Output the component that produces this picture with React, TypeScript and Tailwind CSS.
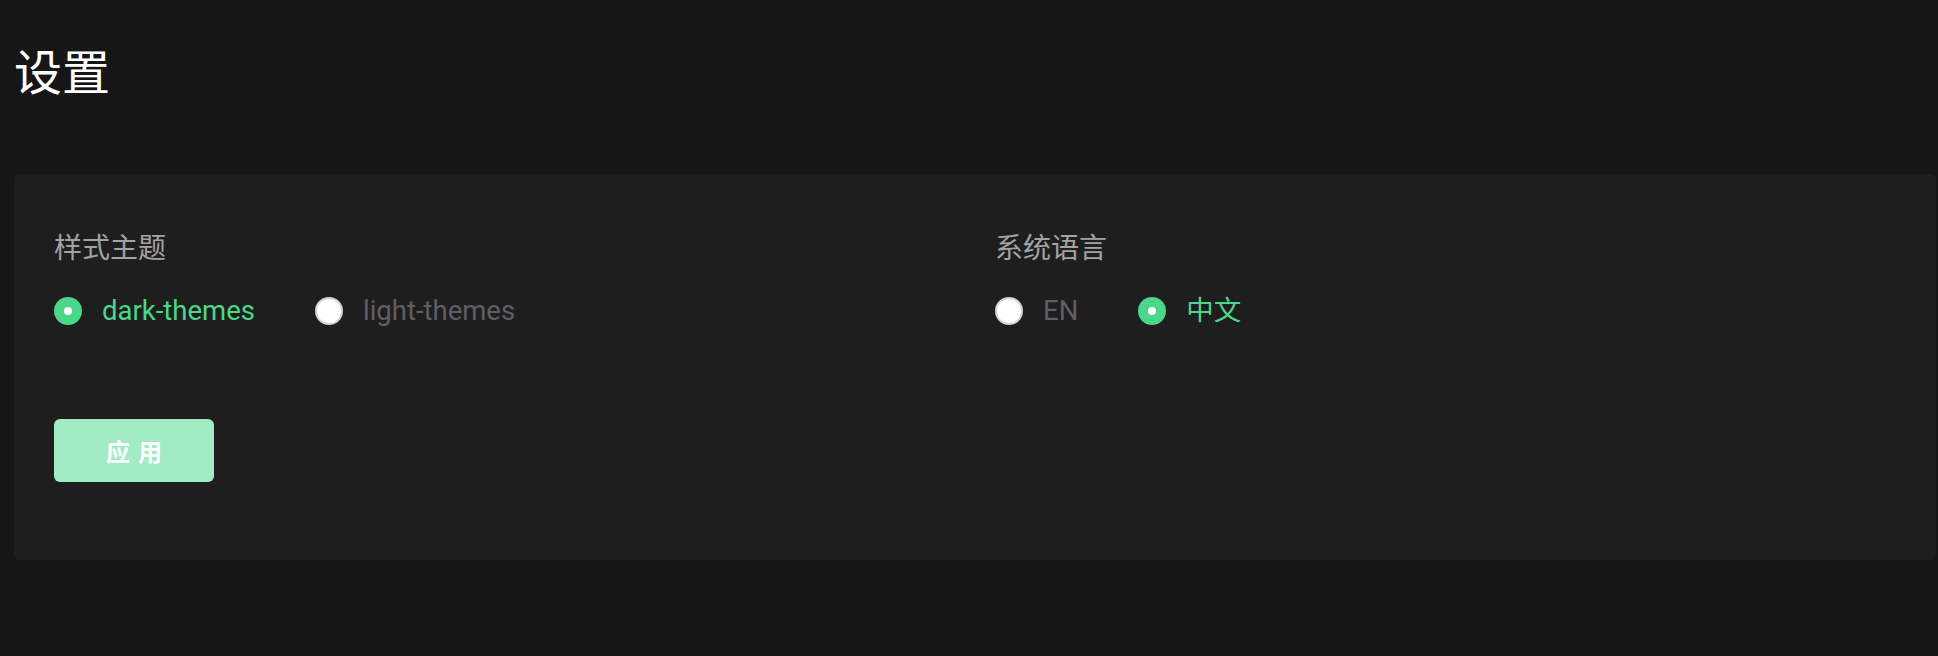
import * as React from "react";

const cjk = { fontFamily: '"Noto Sans CJK SC", sans-serif' };
const latin = { fontFamily: 'Roboto, "Noto Sans CJK SC", sans-serif' };

function Radio({ checked, label }: { checked: boolean; label: string }) {
  return (
    <div className="flex items-center">
      {checked ? (
        <span className="w-[28px] h-[28px] rounded-full bg-[#4ad78a] flex items-center justify-center">
          <span className="w-[8px] h-[8px] rounded-full bg-white" />
        </span>
      ) : (
        <span className="w-[28px] h-[28px] rounded-full bg-white border-2 border-[#d4d4d8]" />
      )}
      <span
        className={
          "ml-[20px] text-[27.5px] leading-none " +
          (checked ? "text-[#4ad78a]" : "text-[#5e5e63]")
        }
        style={latin}
      >
        {label}
      </span>
    </div>
  );
}

export default function App() {
  return (
    <div className="w-full min-h-screen bg-[#161616] pl-[14px] pr-[2px]">
      <h1 className="pt-[41px] text-[48px] leading-[56px] text-white" style={cjk}>
        设置
      </h1>
      <div className="mt-[77px] bg-[#1f1e1f] rounded-[6px] pl-[40px] pt-[52px] pb-[78px]">
        <div className="flex">
          <div className="w-[941px]">
            <div className="text-[28px] leading-[40px] text-[#a3a3a3]" style={cjk}>
              样式主题
            </div>
            <div className="mt-[31px] flex gap-[60px]">
              <Radio checked label="dark-themes" />
              <Radio checked={false} label="light-themes" />
            </div>
          </div>
          <div>
            <div className="text-[28px] leading-[40px] text-[#a3a3a3]" style={cjk}>
              系统语言
            </div>
            <div className="mt-[31px] flex gap-[60px]">
              <Radio checked={false} label="EN" />
              <Radio checked label="中文" />
            </div>
          </div>
        </div>
        <button
          className="mt-[94px] w-[160px] h-[63px] rounded-[6px] bg-[#a3ebc3] text-white text-[24px] font-bold tracking-[8px] pl-[8px]"
          style={cjk}
        >
          应用
        </button>
      </div>
    </div>
  );
}
